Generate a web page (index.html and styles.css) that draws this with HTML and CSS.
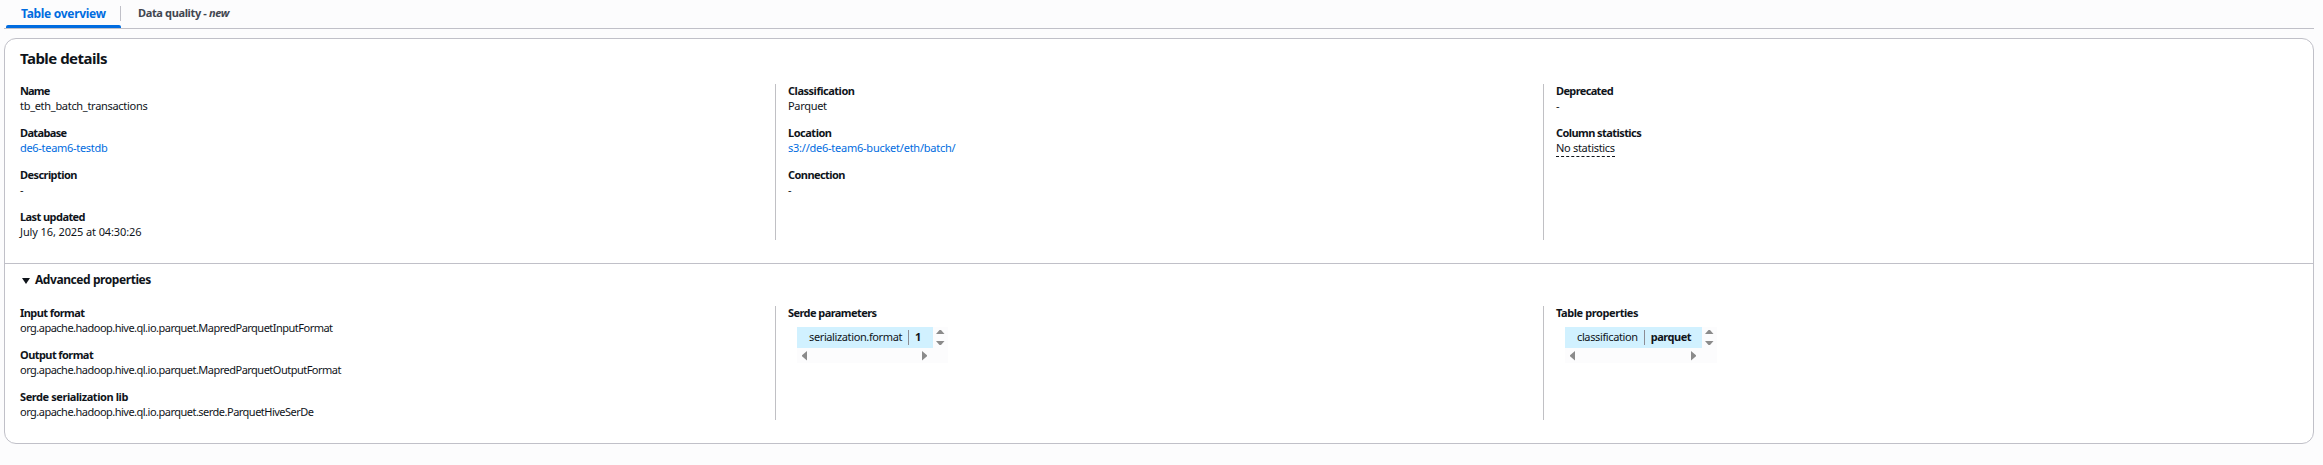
FILE: index.html
```html
<!DOCTYPE html>
<html lang="en">
<head>
<meta charset="utf-8">
<title>Table overview</title>
<link rel="stylesheet" href="styles.css">
</head>
<body>
<nav class="tabs">
  <a class="tab tab-active"><span>Table overview</span></a>
  <a class="tab tab-idle"><span>Data quality - <em>new</em></span></a>
</nav>
<main class="card">
  <section class="details">
    <h2 class="title">Table details</h2>
    <div class="columns">
      <dl class="column">
        <div><dt class="tightest">Name</dt><dd>tb_eth_batch_transactions</dd></div>
        <div><dt class="tighter">Database</dt><dd class="link">de6-team6-testdb</dd></div>
        <div><dt>Description</dt><dd>-</dd></div>
        <div><dt>Last updated</dt><dd class="date">July 16, 2025 at 04:30:26</dd></div>
      </dl>
      <dl class="column">
        <div><dt class="loose">Classification</dt><dd>Parquet</dd></div>
        <div><dt class="loose">Location</dt><dd class="link path">s3://de6-team6-bucket/eth/batch/</dd></div>
        <div><dt>Connection</dt><dd>-</dd></div>
      </dl>
      <dl class="column">
        <div><dt class="tighter">Deprecated</dt><dd>-</dd></div>
        <div><dt>Column statistics</dt><dd><span class="dashed">No statistics</span></dd></div>
      </dl>
    </div>
  </section>
  <section class="advanced">
    <h3 class="subtitle"><svg class="caret" viewBox="0 0 8 6"><path d="M0 0h8L4 6z"/></svg><span>Advanced properties</span></h3>
    <div class="columns">
      <dl class="column">
        <div><dt>Input format</dt><dd class="org">org.apache.hadoop.hive.ql.io.parquet.MapredParquetInputFormat</dd></div>
        <div><dt>Output format</dt><dd class="org">org.apache.hadoop.hive.ql.io.parquet.MapredParquetOutputFormat</dd></div>
        <div><dt class="looser">Serde serialization lib</dt><dd class="org">org.apache.hadoop.hive.ql.io.parquet.serde.ParquetHiveSerDe</dd></div>
      </dl>
      <dl class="column">
        <div><dt>Serde parameters</dt>
          <dd class="scroller serde">
            <div class="pair"><span class="key">serialization.format</span><b class="val">1</b></div>
            <svg class="vbar" viewBox="0 0 15 21"><path d="M3 7h8.500L8 3H6.500zM3 14h8.500L8 18H6.500z"/></svg>
            <svg class="hbar" viewBox="0 0 136 15"><path d="M10 3v9.500L5 8.200v-1zM125 3v9.500l5-4.300v-1z"/></svg>
          </dd></div>
      </dl>
      <dl class="column">
        <div><dt class="looser">Table properties</dt>
          <dd class="scroller props">
            <div class="pair"><span class="key">classification</span><b class="val">parquet</b></div>
            <svg class="vbar" viewBox="0 0 15 21"><path d="M3 7h8.500L8 3H6.500zM3 14h8.500L8 18H6.500z"/></svg>
            <svg class="hbar" viewBox="0 0 137 15"><path d="M10 3v9.500L5 8.200v-1zM126 3v9.500l5-4.300v-1z"/></svg>
          </dd></div>
      </dl>
    </div>
  </section>
</main>
</body>
</html>
```
FILE: styles.css
```css
* { box-sizing: border-box; }
body {
  margin: 0;
  padding: 0 8px 0 4px;
  width: 2323px;
  height: 465px;
  overflow: hidden;
  background: #fcfcfd;
  color: #0f141a;
  font: 11px/15px "Noto Sans", sans-serif;
}
h2, h3, dl, dd { margin: 0; }
.tabs {
  display: flex;
  height: 29px;
  width: 2310px;
  padding-left: 2px;
  border-bottom: 1px solid #c0c0c8;
}
.tab { display: flex; font-weight: 700; white-space: nowrap; }
.tab-active {
  position: relative;
  width: 115px;
  padding: 5px 0 0 15px;
  color: #006ce0;
  font-size: 12px;
  line-height: 17px;
  letter-spacing: -0.3px;
}
.tab-active::before {
  content: "";
  position: absolute;
  right: 0;
  top: 6px;
  width: 1px;
  height: 15px;
  background: #c0c0c8;
}
.tab-active::after {
  content: "";
  position: absolute;
  left: 0;
  right: 0;
  bottom: 0;
  height: 3px;
  border-radius: 2px 2px 0 0;
  background: #006ce0;
}
.tab-idle { padding: 5px 0 0 17px; color: #424650; letter-spacing: -0.36px; }
.card {
  width: 2310px;
  height: 406px;
  margin-top: 9px;
  border: 1px solid #c0c0c8;
  border-radius: 12px;
  background: #fff;
}
.details { height: 225px; padding: 9px 15px 0; border-bottom: 1px solid #c0c0c8; }
.title { height: 36px; font-size: 15px; line-height: 21px; letter-spacing: -0.52px; }
.columns { display: grid; grid-template-columns: 755px 768px 1fr; }
.column { display: flex; flex-direction: column; gap: 12px; white-space: nowrap; }
.column + .column { border-left: 1px solid #c0c0c4; padding-left: 12px; }
dt, dd { height: 15px; line-height: 13px; }
dt { font-weight: 700; letter-spacing: -0.57px; }
dd { letter-spacing: -0.3px; }
.tightest { letter-spacing: -0.83px; }
.tighter { letter-spacing: -0.64px; }
.loose { letter-spacing: -0.48px; }
.looser { letter-spacing: -0.42px; }
.date { letter-spacing: -0.11px; }
.path { letter-spacing: -0.24px; }
.org { letter-spacing: -0.51px; }
.link { color: #006ce0; }
.dashed { display: inline-block; height: 16px; border-bottom: 1px dashed #0f141a; }
.advanced { padding: 8px 15px 0; }
.subtitle {
  display: flex;
  align-items: center;
  gap: 5px;
  height: 17px;
  margin-bottom: 17px;
  padding-left: 2px;
  font-size: 12px;
  line-height: 17px;
  letter-spacing: -0.43px;
}
.subtitle span { margin-top: -2px; }
.caret { width: 8px; height: 6px; fill: #0f141a; }
.scroller {
  display: grid;
  grid-template-rows: 21px 15px;
  width: 151px;
  height: 36px;
  margin: 6px 0 0 9px;
  background: #fcfcfd;
}
.serde { grid-template-columns: 136px 15px; }
.props { grid-template-columns: 137px 15px; width: 152px; }
.pair { display: flex; padding: 3px 0 3px 12px; background: #d1f1ff; }
.key { letter-spacing: -0.38px; }
.val { margin-left: 6px; padding-left: 6px; border-left: 1px solid #8c8c94; letter-spacing: -0.46px; }
.pair > * { height: 15px; }
.vbar { width: 15px; height: 21px; fill: #8b8b8b; }
.hbar { width: 100%; height: 15px; fill: #8b8b8b; }
```
